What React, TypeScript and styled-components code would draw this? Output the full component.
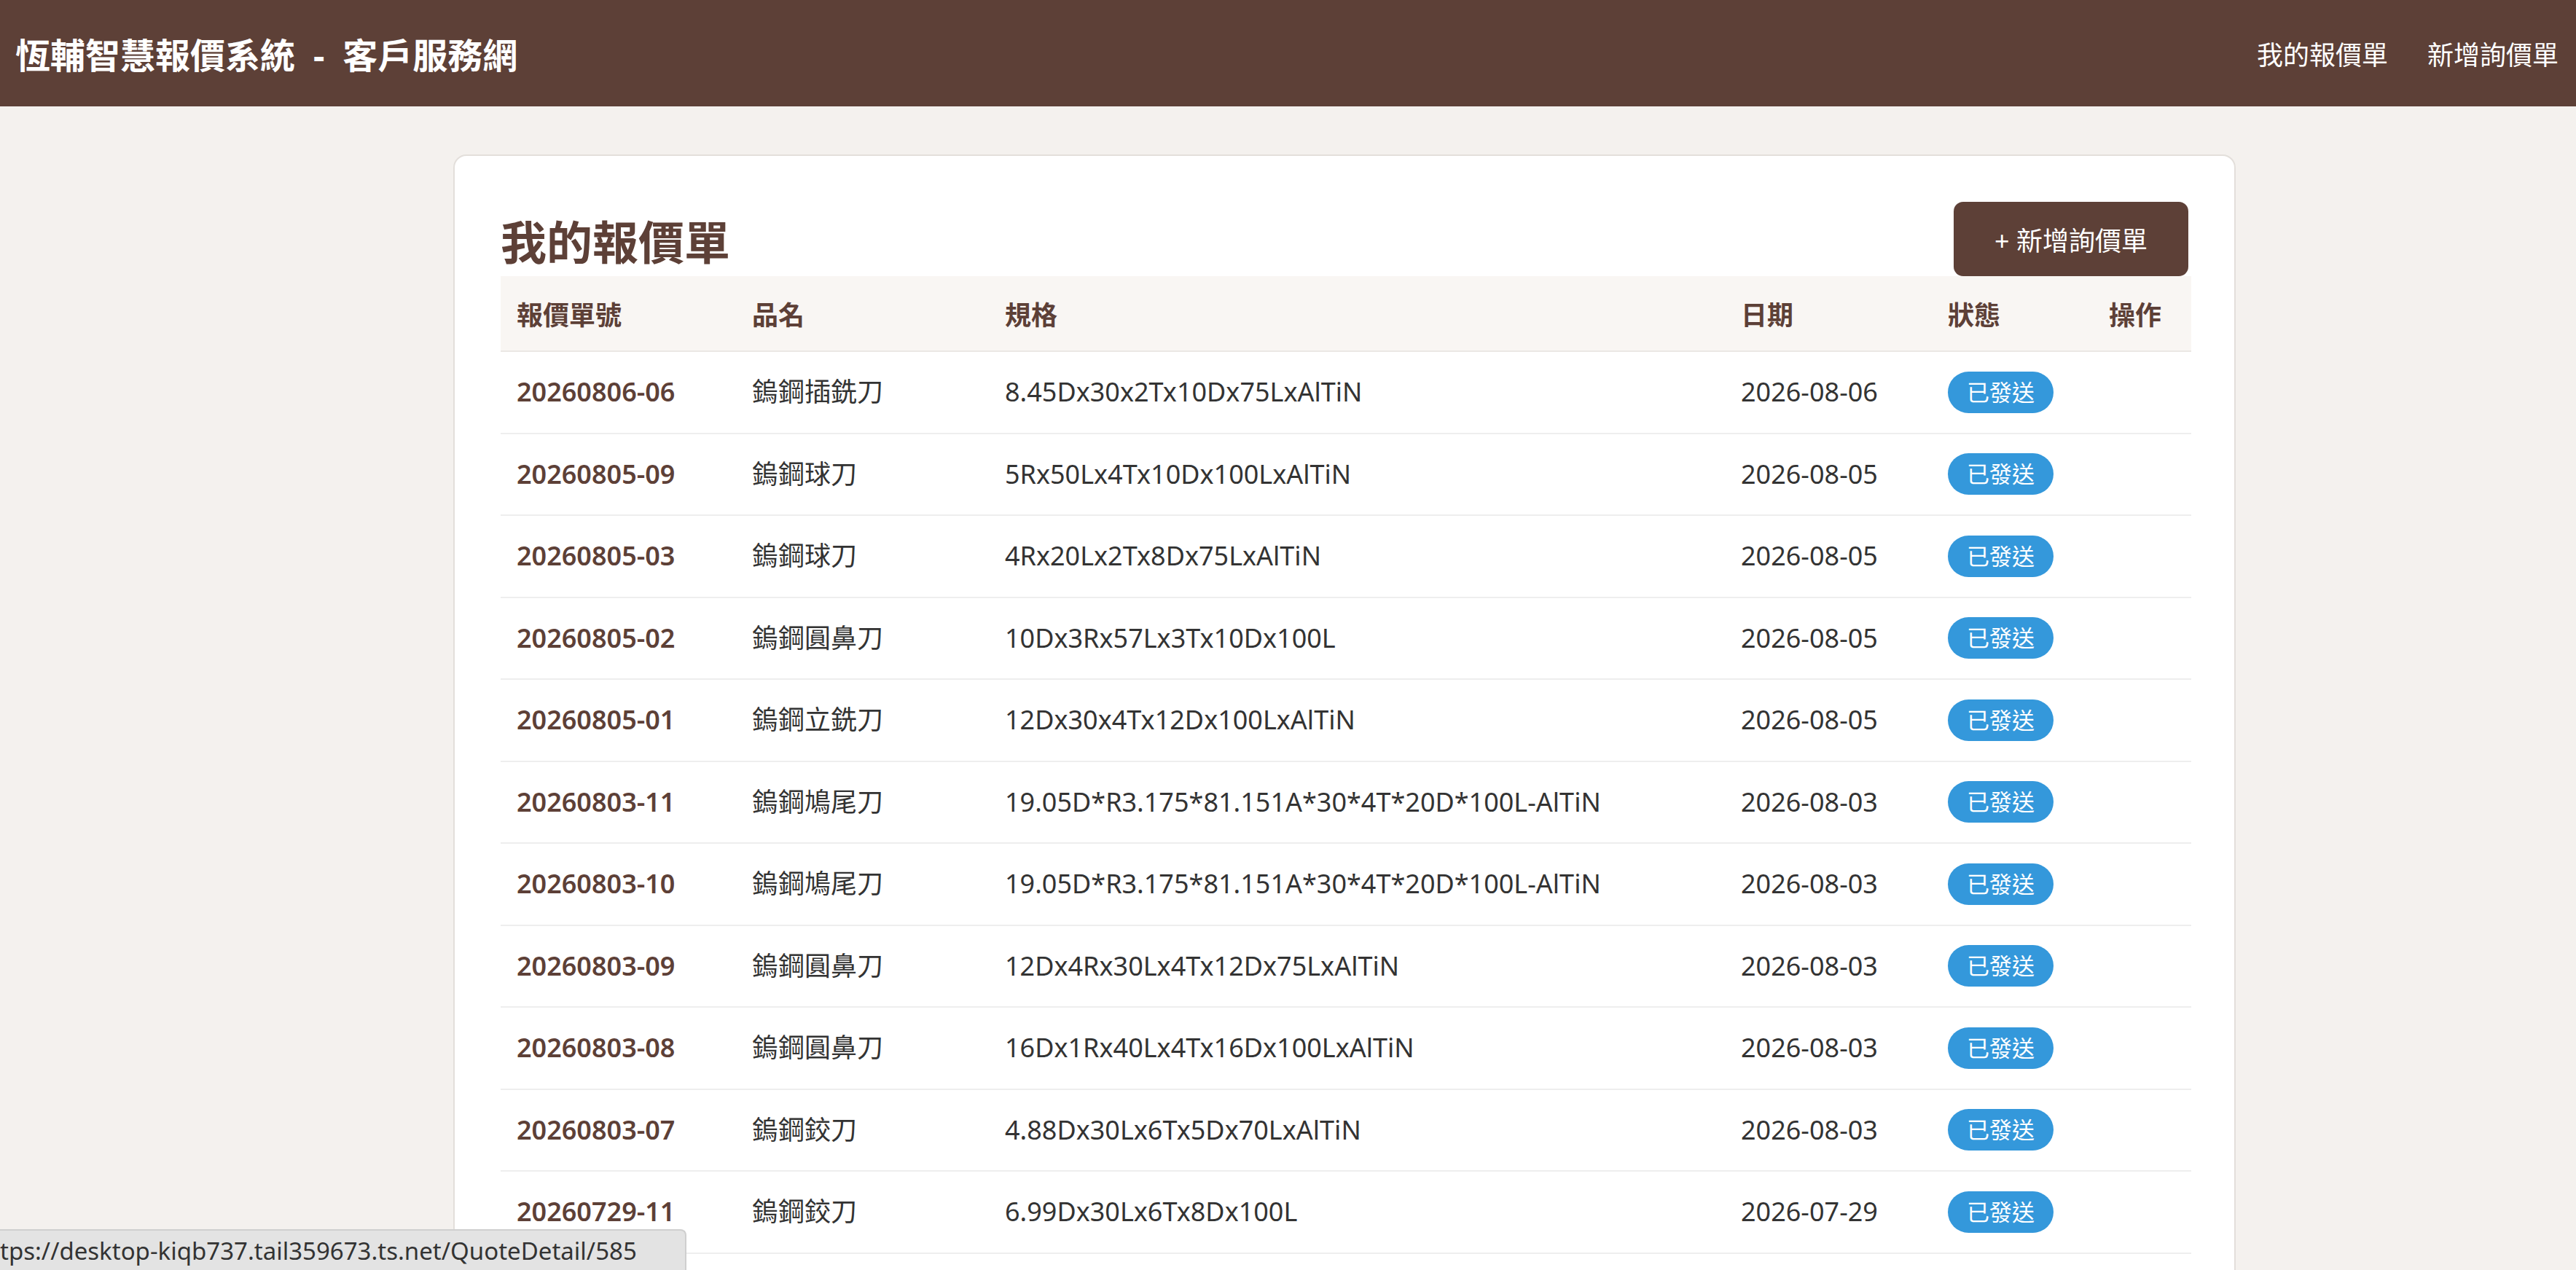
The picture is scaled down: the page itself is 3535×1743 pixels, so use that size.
import React from 'react';
import styled, { createGlobalStyle } from 'styled-components';

const BROWN = '#5d4037';

const GlobalStyle = createGlobalStyle`
   html, body {
      margin: 0;
      padding: 0;
      overflow: hidden;
      background: #f4f1ee;
      font-family: "Noto Sans", "Noto Sans CJK TC", sans-serif;
      color: #333;
   }
`;

const TopBar = styled.header`
   height: 146px;
   background: ${BROWN};
   display: flex;
   align-items: center;
   justify-content: space-between;
   padding: 0 24px 0 21px;
`;

const Brand = styled.h1`
   margin: 0;
   font-size: 48px;
   font-weight: 700;
   color: #fff;
   white-space: pre;
`;

const Nav = styled.nav`
   display: flex;
   gap: 54px;
`;

const NavLink = styled.a`
   font-size: 36px;
   color: #fff;
   text-decoration: none;
   cursor: pointer;
`;

const Card = styled.section`
   width: 2446px;
   box-sizing: border-box;
   margin: 66px 0 0 622px;
   padding: 63px;
   background: #fff;
   border: 2px solid #e3dfdb;
   border-radius: 18px;
`;

const CardHead = styled.div`
   display: flex;
   align-items: center;
   justify-content: space-between;
`;

const Title = styled.h2`
   margin: 0;
   font-size: 63px;
   font-weight: 700;
   color: ${BROWN};
`;

const AddButton = styled.button`
   height: 102px;
   padding: 0 56px;
   border: none;
   border-radius: 13px;
   background: ${BROWN};
   color: #fff;
   font-family: inherit;
   font-size: 36px;
   cursor: pointer;
`;

const Table = styled.table`
   width: 100%;
   table-layout: fixed;
   border-collapse: collapse;
   font-size: 36px;
`;

const Th = styled.th`
   height: 102px;
   padding: 0 22px;
   text-align: left;
   font-weight: 700;
   color: ${BROWN};
   background: #f9f6f3;
   border-bottom: 2px solid #ebe8e5;
`;

const Td = styled.td<{ $strong?: boolean }>`
   height: 110.5px;
   padding: 0 22px;
   line-height: 1.5;
   vertical-align: middle;
   white-space: nowrap;
   border-bottom: 2px solid #eeeeee;
   color: ${p => (p.$strong ? BROWN : '#333')};
   font-weight: ${p => (p.$strong ? 600 : 400)};
`;

const Badge = styled.span`
   display: inline-block;
   height: 57px;
   line-height: 57px;
   padding: 0 26px;
   border-radius: 29px;
   background: #3498db;
   color: #fff;
   font-size: 31px;
`;

const StatusBubble = styled.div`
   position: fixed;
   left: 0;
   bottom: 0;
   width: 942px;
   height: 56px;
   box-sizing: border-box;
   display: flex;
   align-items: center;
   background: #e3e3e3;
   border-top: 2px solid #cfcfcf;
   border-right: 2px solid #cfcfcf;
   border-top-right-radius: 8px;
   font-size: 33px;
   color: #333;
   white-space: nowrap;
   overflow: hidden;
`;

interface IQuote {
   no: string;
   name: string;
   spec: string;
   date: string;
}

const quotes: IQuote[] = [
   { no: '20260806-06', name: '鎢鋼插銑刀', spec: '8.45Dx30x2Tx10Dx75LxAlTiN', date: '2026-08-06' },
   { no: '20260805-09', name: '鎢鋼球刀', spec: '5Rx50Lx4Tx10Dx100LxAlTiN', date: '2026-08-05' },
   { no: '20260805-03', name: '鎢鋼球刀', spec: '4Rx20Lx2Tx8Dx75LxAlTiN', date: '2026-08-05' },
   { no: '20260805-02', name: '鎢鋼圓鼻刀', spec: '10Dx3Rx57Lx3Tx10Dx100L', date: '2026-08-05' },
   { no: '20260805-01', name: '鎢鋼立銑刀', spec: '12Dx30x4Tx12Dx100LxAlTiN', date: '2026-08-05' },
   { no: '20260803-11', name: '鎢鋼鳩尾刀', spec: '19.05D*R3.175*81.151A*30*4T*20D*100L-AlTiN', date: '2026-08-03' },
   { no: '20260803-10', name: '鎢鋼鳩尾刀', spec: '19.05D*R3.175*81.151A*30*4T*20D*100L-AlTiN', date: '2026-08-03' },
   { no: '20260803-09', name: '鎢鋼圓鼻刀', spec: '12Dx4Rx30Lx4Tx12Dx75LxAlTiN', date: '2026-08-03' },
   { no: '20260803-08', name: '鎢鋼圓鼻刀', spec: '16Dx1Rx40Lx4Tx16Dx100LxAlTiN', date: '2026-08-03' },
   { no: '20260803-07', name: '鎢鋼鉸刀', spec: '4.88Dx30Lx6Tx5Dx70LxAlTiN', date: '2026-08-03' },
   { no: '20260729-11', name: '鎢鋼鉸刀', spec: '6.99Dx30Lx6Tx8Dx100L', date: '2026-07-29' },
];

const columns = [
   { label: '報價單號', width: 323 },
   { label: '品名', width: 347 },
   { label: '規格', width: 1010 },
   { label: '日期', width: 284 },
   { label: '狀態', width: 221 },
   { label: '操作', width: 135 },
];

const App = () => {
   return (
      <>
         <GlobalStyle />
         <TopBar>
            <Brand>{'恆輔智慧報價系統  -  客戶服務網'}</Brand>
            <Nav>
               <NavLink>我的報價單</NavLink>
               <NavLink>新增詢價單</NavLink>
            </Nav>
         </TopBar>

         <Card>
            <CardHead>
               <Title>我的報價單</Title>
               <AddButton>+ 新增詢價單</AddButton>
            </CardHead>
            <Table>
               <colgroup>
                  {columns.map(c => <col key={c.label} style={{ width: c.width }} />)}
               </colgroup>
               <thead>
                  <tr>
                     {columns.map(c => <Th key={c.label}>{c.label}</Th>)}
                  </tr>
               </thead>
               <tbody>
                  {quotes.map(q => (
                     <tr key={q.no}>
                        <Td $strong>{q.no}</Td>
                        <Td>{q.name}</Td>
                        <Td>{q.spec}</Td>
                        <Td>{q.date}</Td>
                        <Td><Badge>已發送</Badge></Td>
                        <Td />
                     </tr>
                  ))}
               </tbody>
            </Table>
         </Card>

         <StatusBubble>tps://desktop-kiqb737.tail359673.ts.net/QuoteDetail/585</StatusBubble>
      </>
   )
}

export default App
